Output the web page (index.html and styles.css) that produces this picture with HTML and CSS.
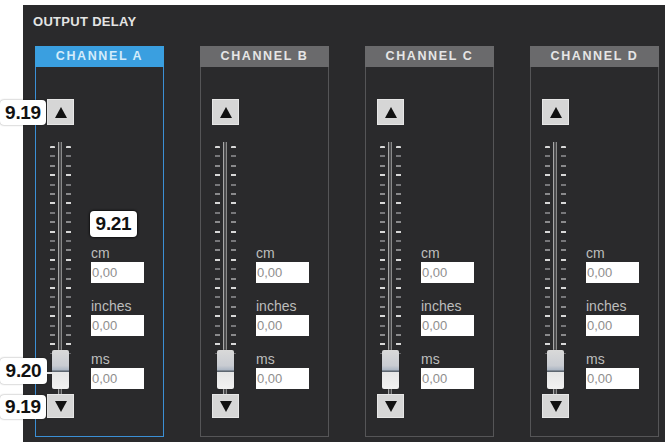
FILE: index.html
```html
<!DOCTYPE html>
<html>
<head>
<meta charset="utf-8">
<link rel="stylesheet" href="styles.css">
</head>
<body>
<section class="panel">
  <h1 class="title">OUTPUT DELAY</h1>
  <div class="channels">
    <div class="channel active">
      <div class="ch-head">CHANNEL A</div>
      <div class="ch-body">
        <div class="fader">
          <div class="step"><svg viewBox="0 0 12 11" class="tri"><path d="M6 0 L12 11 L0 11 Z"/></svg></div>
          <div class="track"><div class="rail"></div><div class="ticks l"></div><div class="ticks r"></div><div class="knob"></div></div>
          <div class="step"><svg viewBox="0 0 12 11" class="tri"><path d="M0 0 L12 0 L6 11 Z"/></svg></div>
        </div>
        <div class="fields">
          <div class="lbl">cm</div><input class="val" value="0,00" readonly>
          <div class="lbl">inches</div><input class="val" value="0,00" readonly>
          <div class="lbl">ms</div><input class="val" value="0,00" readonly>
        </div>
      </div>
    </div>
    <div class="channel">
      <div class="ch-head">CHANNEL B</div>
      <div class="ch-body">
        <div class="fader">
          <div class="step"><svg viewBox="0 0 12 11" class="tri"><path d="M6 0 L12 11 L0 11 Z"/></svg></div>
          <div class="track"><div class="rail"></div><div class="ticks l"></div><div class="ticks r"></div><div class="knob"></div></div>
          <div class="step"><svg viewBox="0 0 12 11" class="tri"><path d="M0 0 L12 0 L6 11 Z"/></svg></div>
        </div>
        <div class="fields">
          <div class="lbl">cm</div><input class="val" value="0,00" readonly>
          <div class="lbl">inches</div><input class="val" value="0,00" readonly>
          <div class="lbl">ms</div><input class="val" value="0,00" readonly>
        </div>
      </div>
    </div>
    <div class="channel">
      <div class="ch-head">CHANNEL C</div>
      <div class="ch-body">
        <div class="fader">
          <div class="step"><svg viewBox="0 0 12 11" class="tri"><path d="M6 0 L12 11 L0 11 Z"/></svg></div>
          <div class="track"><div class="rail"></div><div class="ticks l"></div><div class="ticks r"></div><div class="knob"></div></div>
          <div class="step"><svg viewBox="0 0 12 11" class="tri"><path d="M0 0 L12 0 L6 11 Z"/></svg></div>
        </div>
        <div class="fields">
          <div class="lbl">cm</div><input class="val" value="0,00" readonly>
          <div class="lbl">inches</div><input class="val" value="0,00" readonly>
          <div class="lbl">ms</div><input class="val" value="0,00" readonly>
        </div>
      </div>
    </div>
    <div class="channel">
      <div class="ch-head">CHANNEL D</div>
      <div class="ch-body">
        <div class="fader">
          <div class="step"><svg viewBox="0 0 12 11" class="tri"><path d="M6 0 L12 11 L0 11 Z"/></svg></div>
          <div class="track"><div class="rail"></div><div class="ticks l"></div><div class="ticks r"></div><div class="knob"></div></div>
          <div class="step"><svg viewBox="0 0 12 11" class="tri"><path d="M0 0 L12 0 L6 11 Z"/></svg></div>
        </div>
        <div class="fields">
          <div class="lbl">cm</div><input class="val" value="0,00" readonly>
          <div class="lbl">inches</div><input class="val" value="0,00" readonly>
          <div class="lbl">ms</div><input class="val" value="0,00" readonly>
        </div>
      </div>
    </div>
  </div>
</section>
<div class="callout c-up">9.19</div>
<div class="callout c-field">9.21</div>
<div class="callout c-knob">9.20</div>
<div class="callout c-down">9.19</div>
</body>
</html>
```

FILE: styles.css
```css
* { box-sizing: border-box; }
html, body { margin: 0; padding: 0; }
body {
  width: 665px;
  height: 442px;
  overflow: hidden;
  background: #ffffff;
  position: relative;
  font-family: "Liberation Sans", Arial, sans-serif;
}
.panel {
  margin: 5px 0 0 23px;
  width: 642px;
  height: 437px;
  background: #2a2a2c;
  padding: 9px 0 0 12px;
}
.title {
  margin: 0 0 17px -2px;
  font-size: 13px;
  line-height: 15px;
  font-weight: bold;
  color: #e4e4e4;
  letter-spacing: 0.3px;
}
.channels {
  display: flex;
  gap: 36px;
}
.channel {
  width: 129px;
  height: 391px;
  border: 1px solid #555557;
  display: flex;
  flex-direction: column;
}
.channel.active { border-color: #3b8fd5; }
.ch-head {
  margin: -1px -1px 0;
  height: 21px;
  background: #6a6a6c;
  color: #e6e6e6;
  font-size: 12.5px;
  font-weight: bold;
  letter-spacing: 1.6px;
  line-height: 21px;
  text-align: center;
}
.active .ch-head { background: #3a9fe0; color: #d3ecfb; }
.ch-body {
  display: flex;
  flex: 1;
}
.fader {
  margin-left: 11px;
  width: 27px;
  padding-top: 32px;
  display: flex;
  flex-direction: column;
}
.step {
  width: 27px;
  height: 26px;
  background: #d6d6d6;
  border: 1px solid #e6e6e6;
  display: flex;
  align-items: center;
  justify-content: center;
}
.step + .track + .step { height: 24px; }
.tri { width: 12px; height: 11px; fill: #111; }
.track {
  position: relative;
  height: 269px;
}
.rail {
  position: absolute;
  left: 11px;
  top: 17px;
  bottom: 0;
  width: 4px;
  background: #4a4a4c;
  border-left: 1px solid #a8a8a8;
  border-right: 1px solid #8a8a8a;
}
.ticks {
  position: absolute;
  top: 21px;
  height: 208px;
  width: 5px;
  border-radius: 1px;
  background-image: repeating-linear-gradient(to bottom,
    #d8d8d8 0, #d8d8d8 2px, transparent 2px, transparent 9.4px,
    #77777a 9.4px, #77777a 11.4px, transparent 11.4px, transparent 18.8px,
    #8a8a8c 18.8px, #8a8a8c 20.8px, transparent 20.8px, transparent 28.2px);
}
.ticks.l { left: 3px; }
.ticks.r { left: 19px; }
.knob {
  position: absolute;
  left: 5px;
  bottom: 5px;
  width: 17px;
  height: 39px;
  border-radius: 2px;
  background: linear-gradient(to bottom, #d9d9d9 0, #c9ccd2 40%, #aab4c2 52%, #5d6670 53%, #5d6670 56%, #e6e6e6 57%, #f2f2f2 100%);
  box-shadow: 0 0 1px #222;
}
.fields {
  margin-left: 17px;
  padding-top: 179px;
  display: flex;
  flex-direction: column;
  align-items: flex-start;
}
.lbl {
  font-size: 14px;
  line-height: 14px;
  color: #bdbdbd;
  margin-bottom: 2px;
}
.val {
  display: block;
  width: 53px;
  height: 21px;
  margin: 0 0 16px;
  padding: 0 1px;
  border: none;
  outline: none;
  background: #ffffff;
  font-family: "Liberation Sans", Arial, sans-serif;
  font-size: 13px;
  color: #8e8e8e;
}
.callout {
  position: absolute;
  background: #ffffff;
  border-radius: 4px;
  box-shadow: 0 0 2px rgba(0,0,0,0.45);
  font-size: 19px;
  font-weight: bold;
  color: #111;
  text-align: center;
  letter-spacing: -0.3px;
}
.c-up { left: 0; top: 100px; width: 46px; height: 25px; line-height: 25px; }
.c-field { left: 90px; top: 211px; width: 47px; height: 26px; line-height: 26px; box-shadow: 0 0 2px 1px rgba(0,0,0,0.6); }
.c-knob { left: 0; top: 358px; width: 47px; height: 26px; line-height: 26px; }
.c-knob::after {
  content: "";
  position: absolute;
  left: 47px;
  top: 14px;
  width: 21px;
  height: 2px;
  background: #e8e8e8;
}
.c-down { left: 0; top: 395px; width: 46px; height: 24px; line-height: 24px; }
```
